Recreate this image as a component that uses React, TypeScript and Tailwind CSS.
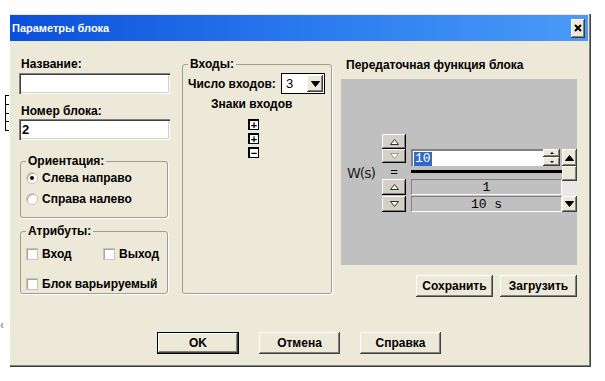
import React from 'react'

const raised =
  'bg-[#ece9d8] shadow-[inset_-1px_-1px_0_#404040,inset_1px_1px_0_#ffffff,inset_-2px_-2px_0_#808080]'
const sunken =
  'bg-white shadow-[inset_1px_1px_0_#808080,inset_2px_2px_0_#404040,inset_-1px_-1px_0_#ffffff,inset_-2px_-2px_0_#d4d0c8]'
const grayBtn =
  'bg-[#d4d0c8] shadow-[inset_-1px_-1px_0_#000000,inset_1px_1px_0_#ffffff,inset_-2px_-2px_0_#808080]'

const Tri = ({ down, dim, filled }: { down?: boolean; dim?: boolean; filled?: boolean }) => (
  <svg width="9" height="6" viewBox="0 0 9 6">
    <polygon
      points={down ? '0.5,0.5 8.5,0.5 4.5,5.5' : '4.5,0.5 8.5,5.5 0.5,5.5'}
      fill={filled ? '#000' : '#fff'}
      stroke={filled ? '#000' : dim ? '#9a9a9a' : '#303030'}
      strokeWidth="1"
    />
  </svg>
)

const Field = ({ value }: { value?: string }) => (
  <div className={`${sunken} h-[21px] w-[151px] pl-[3px] flex items-center text-[13px] leading-none`}>
    {value}
  </div>
)

const Radio = ({ on, label }: { on?: boolean; label: string }) => (
  <div className="flex items-center h-[21px] gap-[4px]">
    <div className="size-[12px] rounded-full bg-white border border-[#c8c5b8] shadow-[inset_1px_1px_0_#a8a597] flex items-center justify-center">
      {on && <div className="size-[4px] rounded-full bg-black" />}
    </div>
    <span>{label}</span>
  </div>
)

const Check = ({ label }: { label: string }) => (
  <div className="flex items-center gap-[4px]">
    <div className="size-[12px] bg-white border border-[#c8c5b8] shadow-[inset_1px_1px_0_#a8a597]" />
    <span>{label}</span>
  </div>
)

const Sign = ({ s }: { s: string }) => (
  <div className="size-[11px] bg-white border-l-2 border-t-2 border-black border-r border-b flex items-center justify-center text-[11px] leading-none font-bold">
    {s}
  </div>
)

const Btn = ({ label, w, def }: { label: string; w: string; def?: boolean }) => (
  <div className={`${def ? 'border border-black' : ''} ${w} h-[22px]`}>
    <div className={`${raised} h-full flex items-center justify-center`}>{label}</div>
  </div>
)

export default function App() {
  return (
    <div className="relative w-[605px] h-[381px] bg-white pt-[13px] pl-[9px] font-['Liberation_Sans',Arial,sans-serif] text-[12px] font-bold text-black overflow-hidden">
      {/* background bits behind the dialog */}
      <div className="absolute left-[5px] top-[95px] h-[36px] w-[3px] border-l border-black flex flex-col justify-between">
        <div className="h-px w-[3px] bg-black" />
        <div className="h-px w-[3px] bg-black" />
        <div className="h-px w-[3px] bg-black" />
        <div className="h-px w-[3px] bg-black" />
        <div className="h-px w-[3px] bg-black" />
      </div>
      <div className="absolute left-0 top-[316px] text-[12px] text-[#9a9a9a]">‹</div>

      <div className="w-[582px] h-[354px] p-[1px] pr-[3px] pb-[2px] bg-[#ece9d8] shadow-[inset_1px_1px_0_#ffffff,inset_-1px_-1px_0_#404040,inset_-2px_-2px_0_#808080] flex flex-col">
        <div className="h-[26px] mt-[1px] bg-linear-to-r from-[#0a4fd9] via-[#2a78ee] to-[#4a9bf7] flex items-center pl-[2px] pr-[3px] justify-between">
          <span className="text-white text-[11px]">Параметры блока</span>
          <div className={`${raised} w-[14px] h-[19px] flex items-center justify-center`}>
            <svg width="8" height="8" viewBox="0 0 8 8">
              <path d="M1 1 L7 7 M7 1 L1 7" stroke="#000" strokeWidth="2" />
            </svg>
          </div>
        </div>

        <div className="flex pt-[16px] pl-[9px]">
          {/* left column */}
          <div className="w-[151px] flex flex-col">
            <div className="h-[14px] leading-[14px] pl-[2px]">Название:</div>
            <div className="mt-[2px]">
              <Field />
            </div>
            <div className="mt-[10px] h-[14px] leading-[14px] pl-[2px]">Номер блока:</div>
            <div className="mt-[1px]">
              <Field value="2" />
            </div>
            <fieldset className="mt-[14px] ml-[1px] w-[148px] h-[64px] border border-[#a09e92] rounded-[3px] shadow-[1px_1px_0_#ffffff]">
              <legend className="ml-[5px] px-[2px] h-[14px] leading-[14px]">Ориентация:</legend>
              <div className="pl-[5px] flex flex-col -mt-px">
                <Radio on label="Слева направо" />
                <Radio label="Справа налево" />
              </div>
            </fieldset>
            <fieldset className="mt-[6px] ml-[1px] w-[148px] h-[70px] border border-[#a09e92] rounded-[3px] shadow-[1px_1px_0_#ffffff]">
              <legend className="ml-[5px] px-[2px] h-[14px] leading-[14px]">Атрибуты:</legend>
              <div className="pl-[5px] mt-[7px] flex">
                <div className="w-[77px]">
                  <Check label="Вход" />
                </div>
                <Check label="Выход" />
              </div>
              <div className="pl-[5px] mt-[12px]">
                <Check label="Блок варьируемый" />
              </div>
            </fieldset>
          </div>

          {/* middle */}
          <fieldset className="ml-[12px] w-[150px] h-[237px] border border-[#a09e92] rounded-[3px] shadow-[1px_1px_0_#ffffff]">
            <legend className="ml-[5px] px-[2px] h-[14px] leading-[14px]">Входы:</legend>
            <div className="flex items-center h-[21px] mt-[2px] pl-[5px]">
              <span className="w-[93px]">Число входов:</span>
              <div className="w-[44px] h-[21px] bg-white border border-black flex items-center justify-between pl-[4px] pr-[1px] text-[13px] font-normal">
                <span>3</span>
                <div className={`${raised} w-[16px] h-[17px] flex items-center justify-center`}>
                  <Tri down filled />
                </div>
              </div>
            </div>
            <div className="mt-[3px] h-[14px] leading-[14px] pl-[28px]">Знаки входов</div>
            <div className="mt-[8px] pl-[65px] flex flex-col gap-[3px]">
              <Sign s="+" />
              <Sign s="+" />
              <Sign s="−" />
            </div>
          </fieldset>

          {/* right */}
          <div className="ml-[9px] w-[236px] flex flex-col">
            <div className="h-[14px] leading-[14px] pl-[5px] mt-[1px]">Передаточная функция блока</div>
            <div className="mt-[7px] h-[186px] bg-[#c0c0c0] flex pl-[6px] pt-[55px] font-normal">
              <div className="w-[35px] mt-[32px] text-[14px] leading-[14px] font-['DejaVu_Sans',sans-serif] tracking-[-1px] text-[#202020]">
                W(s)
              </div>
              <div className="w-[24px] flex flex-col">
                <div className={`${grayBtn} h-[15px] flex items-center justify-center`}>
                  <Tri />
                </div>
                <div className={`${grayBtn} h-[14px] flex items-center justify-center`}>
                  <Tri down dim />
                </div>
                <div className="h-[16px] flex items-center justify-center text-[13px] leading-none">=</div>
                <div className={`${grayBtn} h-[16px] flex items-center justify-center`}>
                  <Tri />
                </div>
                <div className={`${grayBtn} mt-[1px] h-[16px] flex items-center justify-center`}>
                  <Tri down />
                </div>
              </div>
              <div className="ml-[5px] w-[151px] mt-[15px] flex flex-col font-['Liberation_Mono',monospace] text-[13px]">
                <div className="flex h-[17px]">
                  <div className="w-[132px] bg-white border-t-2 border-l-2 border-[#808080] flex items-center pl-[1px]">
                    <span className="bg-[#316ac5] text-white leading-[14px] px-[1px]">10</span>
                  </div>
                  <div className="w-[17px] bg-white flex flex-col">
                    <div className={`${raised} h-[8px] flex items-center justify-center`}>
                      <div className="w-0 h-0 border-l-[2px] border-r-[2px] border-b-[2px] border-l-transparent border-r-transparent border-b-black" />
                    </div>
                    <div className={`${raised} h-[9px] flex items-center justify-center`}>
                      <div className="w-0 h-0 border-l-[2px] border-r-[2px] border-t-[2px] border-l-transparent border-r-transparent border-t-black" />
                    </div>
                  </div>
                </div>
                <div className="mt-[4px] h-[3px] bg-black" />
                <div className="mt-[6px] h-[16px] border-t border-l border-[#808080] border-r border-b border-r-white border-b-white flex items-center justify-center leading-none">
                  1
                </div>
                <div className="mt-[1px] h-[16px] border-t border-l border-[#808080] border-r border-b border-r-white border-b-white flex items-center justify-center leading-none whitespace-pre">
                  10 s
                </div>
              </div>
              <div className="w-[15px] mt-[15px] h-[63px] flex flex-col bg-[#e8e8e8]">
                <div className={`${raised} h-[17px] flex items-center justify-center`}>
                  <Tri filled />
                </div>
                <div className={`${raised} h-[15px]`} />
                <div className="flex-1" />
                <div className={`${raised} h-[16px] flex items-center justify-center`}>
                  <Tri down filled />
                </div>
              </div>
            </div>
            <div className="mt-[10px] flex justify-end gap-[7px]">
              <Btn label="Сохранить" w="w-[77px]" />
              <Btn label="Загрузить" w="w-[77px]" />
            </div>
          </div>
        </div>

        <div className="mt-[35px] flex justify-center gap-[20px]">
          <Btn label="OK" w="w-[82px]" def />
          <Btn label="Отмена" w="w-[81px]" />
          <Btn label="Справка" w="w-[81px]" />
        </div>
      </div>
    </div>
  )
}
